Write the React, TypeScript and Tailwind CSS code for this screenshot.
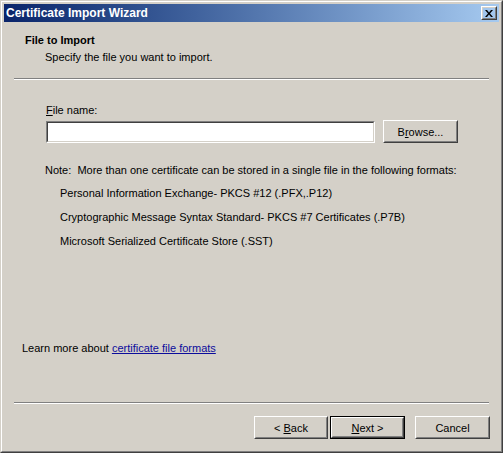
import React from "react";

const font = { fontFamily: '"Liberation Sans", Arial, sans-serif' };

function Raised({ children, className = "" }: { children: React.ReactNode; className?: string }) {
  return (
    <div className={`border border-t-white border-l-white border-r-[#404040] border-b-[#404040] ${className}`}>
      <div className="flex h-full w-full items-center justify-center border border-t-[#d4d0c8] border-l-[#d4d0c8] border-r-[#808080] border-b-[#808080]">
        <span>{children}</span>
      </div>
    </div>
  );
}

function Button({ children, isDefault = false, className = "" }: { children: React.ReactNode; isDefault?: boolean; className?: string }) {
  if (isDefault) {
    return (
      <div className={`border border-black ${className}`}>
        <Raised className="h-full w-full">{children}</Raised>
      </div>
    );
  }
  return <Raised className={className}>{children}</Raised>;
}

function Separator() {
  return (
    <div className="mx-[10px]">
      <div className="h-px bg-[#808080]" />
      <div className="h-px bg-white" />
    </div>
  );
}

const formats = [
  "Personal Information Exchange- PKCS #12 (.PFX,.P12)",
  "Cryptographic Message Syntax Standard- PKCS #7 Certificates (.P7B)",
  "Microsoft Serialized Certificate Store (.SST)",
];

export default function App() {
  return (
    <div
      className="h-[453px] w-[503px] border border-t-[#d4d0c8] border-l-[#d4d0c8] border-r-[#404040] border-b-[#404040] bg-[#d4d0c8] text-[11px] leading-[14px] text-black"
      style={font}
    >
      <div className="flex h-full flex-col border border-t-white border-l-white border-r-[#808080] border-b-[#808080] p-[2px]">
        {/* caption */}
        <div className="flex h-[18px] items-center justify-between bg-gradient-to-r from-[#0a246a] to-[#a6caf0] pl-[2px] pr-[2px]">
          <span className="text-[12px] font-bold text-white">Certificate Import Wizard</span>
          <Raised className="h-[14px] w-[16px]">
            <svg width="8" height="7" viewBox="0 0 8 7" className="block">
              <path d="M0 0h2l2 2.5L6 0h2L5 3.5 8 7H6L4 4.5 2 7H0l3-3.5z" fill="#000" />
            </svg>
          </Raised>
        </div>

        {/* header */}
        <div className="pl-[21px] pt-[11px] font-bold">File to Import</div>
        <div className="pl-[41px] pt-[3px]">Specify the file you want to import.</div>
        <div className="mt-[14px]">
          <Separator />
        </div>

        {/* body */}
        <div className="flex flex-1 flex-col pl-[42px] pr-[40px] pt-[23px]">
          <div>
            <span className="underline">F</span>ile name:
          </div>
          <div className="mt-[3px] flex items-center gap-[8px]">
            <div className="h-[22px] w-[329px] border border-t-[#808080] border-l-[#808080] border-r-white border-b-white">
              <div className="h-full w-full border border-t-[#404040] border-l-[#404040] border-r-[#d4d0c8] border-b-[#d4d0c8] bg-white" />
            </div>
            <Button className="h-[23px] w-[75px]">
              B<span className="underline">r</span>owse...
            </Button>
          </div>
          <div className="mt-[20px] -ml-[1px]">Note:&nbsp; More than one certificate can be stored in a single file in the following formats:</div>
          <div className="mt-[9px] flex flex-col gap-[10px] pl-[14px]">
            {formats.map((f) => (
              <div key={f}>{f}</div>
            ))}
          </div>
        </div>

        <div className="pl-[18px] pb-[47px]">
          Learn more about <span className="text-[#0c0c9c] underline">certificate file formats</span>
        </div>

        <Separator />

        {/* buttons */}
        <div className="flex justify-end pr-[9px] pt-[12px] pb-[10px]">
          <Button className="h-[23px] w-[74px]">
            &lt; <span className="underline">B</span>ack
          </Button>
          <Button isDefault className="ml-[2px] h-[23px] w-[75px]">
            <span className="underline">N</span>ext &gt;
          </Button>
          <Button className="ml-[10px] h-[23px] w-[75px]">Cancel</Button>
        </div>
      </div>
    </div>
  );
}
